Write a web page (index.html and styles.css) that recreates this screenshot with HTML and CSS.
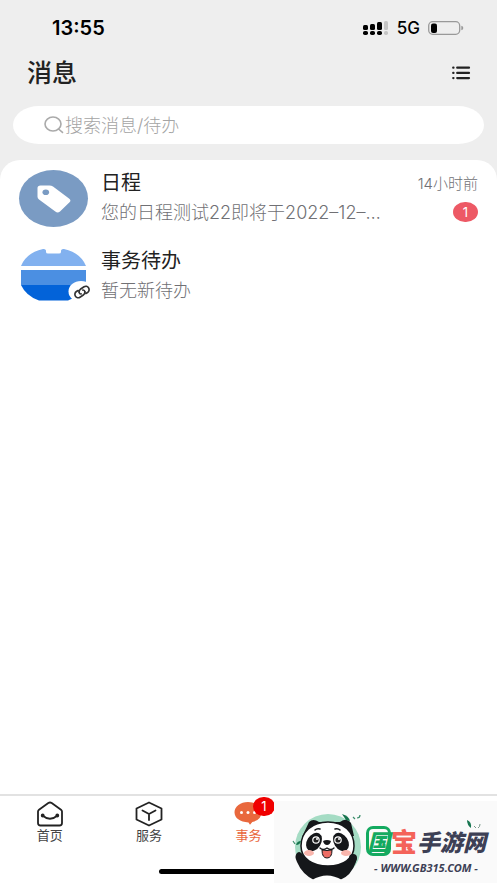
FILE: index.html
```html
<!DOCTYPE html>
<html lang="zh-CN">
<head>
    <meta charset="UTF-8">
    <meta name="viewport" content="width=device-width, initial-scale=1.0">
    <title>消息</title>
    <link rel="stylesheet" href="styles.css">
</head>
<body>
    <div class="status-bar">
        <span class="clock">13:55</span>
        <div class="status-icons">
            <svg class="signal" width="26" height="14" viewBox="0 0 26 14">
                <rect x="0" y="4" width="5" height="5" rx="1.5"/>
                <rect x="7" y="3" width="5" height="6" rx="1.5"/>
                <rect x="14" y="1" width="5" height="8" rx="1.5"/>
                <rect x="21" y="0" width="4" height="9" rx="1.5" fill="#c4c4c4"/>
                <rect x="0" y="10" width="5" height="4" rx="1.8"/>
                <rect x="7" y="10" width="5" height="4" rx="1.8"/>
                <rect x="14" y="10" width="5" height="4" rx="1.8"/>
                <rect x="21" y="10" width="4" height="4" rx="1.8" fill="#c4c4c4"/>
            </svg>
            <span class="network">5G</span>
            <svg width="36" height="14" viewBox="0 0 36 14">
                <rect x="0.7" y="0.7" width="31" height="12.6" rx="4" fill="none" stroke="#999" stroke-width="1.3"/>
                <rect x="3" y="2.5" width="6" height="9.5" rx="2"/>
                <path d="M33.3 4.8q2 .5 2 2.2t-2 2.2z" fill="#999"/>
            </svg>
        </div>
    </div>

    <header class="header">
        <h1>消息</h1>
        <button class="menu-btn" aria-label="菜单">
            <svg width="18" height="14" viewBox="0 0 18 14" fill="none" stroke="#222" stroke-width="2.2" stroke-linecap="round">
                <path d="M1.2 1.7h.3M5.2 1.7H17M1.2 6.9h.3M5.2 6.9H17M1.2 12.1h.3M5.2 12.1H17"/>
            </svg>
        </button>
    </header>

    <label class="search">
        <svg width="20" height="18" viewBox="0 0 20 18" fill="none" stroke="#aaa" stroke-width="1.6" stroke-linecap="round">
            <ellipse cx="9" cy="8" rx="8" ry="7"/>
            <path d="M14.5 13l4 3.4"/>
        </svg>
        <input type="text" placeholder="搜索消息/待办" aria-label="搜索">
    </label>

    <main class="messages">
        <a class="message" href="#">
            <svg class="avatar" width="69" height="57" viewBox="0 0 69 57">
                <ellipse cx="34.5" cy="28.5" rx="34.5" ry="28.5" fill="#7a9bc3"/>
                <path d="M18.5 18q0-2.5 3-2.5h9q2 0 3.500 1L50 28.500q2.700 2 .3 4L41 41.500q-2.300 2-4.700 0L20 29.500q-1.500-1-1.500-2.800z" fill="#fff"/>
                <ellipse cx="26.800" cy="22.300" rx="3.300" ry="2.800" fill="#7a9bc3"/>
            </svg>
            <div class="content">
                <h2>日程</h2>
                <p>您的日程测试22即将于2022–12–…</p>
            </div>
            <div class="side">
                <time>14小时前</time>
                <span class="count">1</span>
            </div>
        </a>
        <a class="message" href="#">
            <svg class="avatar" width="69" height="57" viewBox="0 4 69 57">
                <path d="M2 22Q7 9 24 5q2.500-.5 3 1.500V8q0 1.500 2 1.500H40q2 0 2-1.500V6.500q.5-2 3-1.500Q62 9 67 22z" fill="#82b1ef"/>
                <path d="M2 26H67V41H2z" fill="#4b8fe2"/>
                <path d="M2 41H67Q61 52 49 56.500H20Q7 52 2 41z" fill="#0363d9"/>
                <ellipse cx="62" cy="47.500" rx="12.500" ry="10.500" fill="#fff"/>
                <g transform="translate(63 48) rotate(-32)" fill="none" stroke="#333" stroke-width="1.700" stroke-linecap="round">
                    <path d="M2.500 1.500Q1.500 3.300-.5 3.300H-4.500a3.300 3.300 0 0 1 0-6.600H-2.500"/>
                    <path d="M-2.500-1.500Q-1.500-3.300.5-3.300H4.500a3.300 3.300 0 0 1 0 6.600H2.500"/>
                    <path d="M-2.500-1.500Q-3.300.5-1.800 1.200M2.500 1.500Q3.300-.5 1.800-1.200"/>
                </g>
            </svg>
            <div class="content">
                <h2>事务待办</h2>
                <p>暂无新待办</p>
            </div>
        </a>
    </main>

    <footer class="bottom">
        <nav class="tabs">
            <a class="tab" href="#">
                <svg width="28" height="26" viewBox="0 0 28 26" fill="none" stroke="#222" stroke-width="1.800" stroke-linejoin="round" stroke-linecap="round">
                    <path d="M2 10.500Q2 9.500 3 8.700L12.300 2q1.700-1 3.400 0L25 8.700q1 .8 1 1.800V22q0 2.500-2.500 2.500h-19Q2 24.500 2 22z"/>
                    <path d="M6.500 14.500Q14 21 21.500 14.500"/>
                    <circle cx="6.700" cy="14.500" r="1" fill="#222"/>
                    <circle cx="21.300" cy="14.500" r="1" fill="#222"/>
                </svg>
                <span>首页</span>
            </a>
            <a class="tab" href="#">
                <svg width="28" height="26" viewBox="0 0 28 26" fill="none" stroke="#222" stroke-width="1.800" stroke-linejoin="round" stroke-linecap="round">
                    <path d="M14 1.500L26.500 7.500V18.500L14 24.500 1.500 18.500V7.500z"/>
                    <path d="M7.500 9.500L14 13l6.500-3.500M14 13v6"/>
                </svg>
                <span>服务</span>
            </a>
            <a class="tab active" href="#">
                <svg width="28" height="26" viewBox="0 0 28 26">
                    <path d="M14 1C6.500 1 .5 5.500.5 11.300S6 21 14.500 21.500l1.500 2.300 2.300-2.800Q27.500 19 27.500 11.300C27.500 5.500 21.500 1 14 1z" fill="#e9683d"/>
                    <g fill="#fff"><circle cx="7.500" cy="11.500" r="1.500"/><circle cx="14" cy="11.500" r="1.500"/><circle cx="20.500" cy="11.500" r="1.500"/></g>
                </svg>
                <span>事务</span>
                <b class="tab-count">1</b>
            </a>
        </nav>
        <div class="home-bar"></div>

        <div class="brand">
            <svg width="70" height="68" viewBox="0 0 70 68">
                <circle cx="36" cy="34" r="33" fill="#a5dcc4"/>
                <path d="M5 40Q8 37 11 42L14 45H58L60 41Q66 42 64 49 59 63 48 67H22Q10 61 5 49 2 43 5 40z" fill="#15171a"/>
                <path d="M10 24L17 9Q21 5 27 9L48 9Q55 4 59 10L62 23z" fill="#15171a"/>
                <path d="M20 67Q35 58 50 67z" fill="#fff"/>
                <path d="M36 9C20 9 9 19 9 33c0 13 12 20 27 20s26-7 26-20C62 19 52 9 36 9z" fill="#fff" stroke="#15171a" stroke-width="1.500"/>
                <ellipse cx="22" cy="29" rx="7" ry="10" transform="rotate(32 22 29)" fill="#15171a"/>
                <ellipse cx="49" cy="29" rx="7" ry="10" transform="rotate(-32 49 29)" fill="#15171a"/>
                <circle cx="24" cy="27" r="3.200" fill="#222" stroke="#fff" stroke-width="1.200"/>
                <circle cx="46" cy="27" r="3.200" fill="#222" stroke="#fff" stroke-width="1.200"/>
                <circle cx="25" cy="26" r="1" fill="#fff"/>
                <circle cx="47" cy="26" r="1" fill="#fff"/>
                <path d="M23 17q2-2 5-1M43 16q3-1 5 1" fill="none" stroke="#15171a" stroke-width="1.500" stroke-linecap="round"/>
                <ellipse cx="17" cy="40" rx="5" ry="3" fill="#f9b5ac"/>
                <ellipse cx="54" cy="40" rx="5" ry="3" fill="#f9b5ac"/>
                <path d="M31 28q4-2 8 0-1 4-4 4t-4-4z" fill="#15171a"/>
                <path d="M28 35q3 3 7 0 4 3 7 0" fill="none" stroke="#15171a" stroke-width="1.300" stroke-linecap="round"/>
                <path d="M30 37q5 1 10 0 0 8-5 8t-5-8z" fill="#ed6d65" stroke="#15171a"/>
                <circle cx="61" cy="45" r="4" fill="#15171a"/>
                <path d="M50 1l4 6 4 1q-1-5-8-7z" fill="#14734c"/>
                <path d="M4 32q1-4 5-4-1 4-5 4z" fill="#14734c"/>
                <path d="M1 28l2 3M65 5q3 0 3-3M61 4l2 2" fill="none" stroke="#3c8e6c" stroke-width="1.200"/>
            </svg>
            <div class="brand-text">
                <div class="brand-name"><span class="green">国</span><span class="red">宝</span><span>手游网</span></div>
                <div class="brand-url">- WWW.GB315.COM -</div>
            </div>
            <svg class="leaves" width="16" height="12" viewBox="0 0 16 12">
                <path d="M2 1q5 2 4 8Q2 6 2 1z" fill="#187651"/>
                <path d="M9 7l2 2M13 9q2-1 2-4" fill="none" stroke="#789789"/>
            </svg>
        </div>
    </footer>
</body>
</html>
```

FILE: styles.css
```css
* {
    box-sizing: border-box;
}

body {
    margin: 0;
    min-height: 100vh;
    display: flex;
    flex-direction: column;
    background-color: #eee;
    color: #222;
    font-family: Inter, "Noto Sans CJK SC", sans-serif;
}

h1, h2, p {
    margin: 0;
}

a {
    color: inherit;
    text-decoration: none;
}

svg {
    display: block;
    flex-shrink: 0;
    overflow: visible;
}

.status-bar {
    display: flex;
    justify-content: space-between;
    align-items: center;
    height: 55px;
    padding: 0 33px 0 52px;
    color: #000;
}

.clock {
    font-size: 20px;
    font-weight: 600;
}

.status-icons {
    display: flex;
    align-items: center;
    gap: 8px;
}

.network {
    font-size: 17px;
    font-weight: 500;
}

.header {
    display: flex;
    justify-content: space-between;
    align-items: center;
    height: 36px;
    padding: 0 27px;
}

.header h1 {
    font-size: 25px;
    font-weight: 500;
    line-height: 36px;
}

.menu-btn {
    padding: 0;
    border: none;
    background: none;
    cursor: pointer;
}

.search {
    display: flex;
    align-items: center;
    gap: 1px;
    height: 38px;
    margin: 15px 13px 16px;
    padding: 0 31px;
    border-radius: 26px / 19px;
    background-color: #fff;
}

.search input {
    flex: 1;
    min-width: 0;
    padding: 0;
    border: none;
    outline: none;
    background: none;
    font-family: inherit;
    font-size: 18px;
    font-weight: 300;
}

.search input::placeholder {
    color: #a4a4a4;
}

.messages {
    flex: 1;
    padding: 10px 19px;
    border-radius: 20px 20px 0 0;
    background-color: #fff;
}

.message {
    display: flex;
    gap: 13px;
    margin-bottom: 18px;
}

.content {
    flex: 1;
    min-width: 0;
}

.content h2 {
    font-size: 20px;
    font-weight: 400;
    line-height: 26px;
}

.content p {
    overflow: hidden;
    color: #707074;
    font-size: 18px;
    font-weight: 300;
    line-height: 34px;
    white-space: nowrap;
}

.side {
    display: flex;
    flex-direction: column;
    align-items: flex-end;
    gap: 8px;
    padding-top: 4px;
}

.side time {
    color: #707074;
    font-size: 15px;
    font-weight: 300;
    line-height: 20px;
}

.count {
    width: 25px;
    border-radius: 12px / 10px;
    background-color: #ed5965;
    color: #fff;
    font-size: 13px;
    line-height: 20px;
    text-align: center;
}

.bottom {
    position: relative;
    height: 89px;
    border-top: 2px solid #e2e2e2;
    background-color: #fff;
}

.tabs {
    display: grid;
    grid-template-columns: repeat(5, 1fr);
    padding-top: 5px;
}

.tab {
    position: relative;
    display: flex;
    flex-direction: column;
    align-items: center;
    color: #444;
    font-size: 13px;
    line-height: 16px;
}

.tab.active {
    color: #e9683d;
}

.tab-count {
    position: absolute;
    top: -4px;
    left: 54px;
    width: 22px;
    border-radius: 11px / 10px;
    background-color: #f00000;
    color: #fff;
    font-size: 13px;
    font-weight: 400;
    line-height: 19px;
    text-align: center;
}

.home-bar {
    width: 36%;
    height: 5px;
    margin: 26px auto 0;
    border-radius: 3px;
    background-color: #000;
}

/* brand strip lies over the right side of the tab bar */
.brand {
    position: absolute;
    right: 0;
    bottom: 0;
    display: flex;
    align-items: flex-end;
    gap: 4px;
    width: 223px;
    height: 82px;
    padding: 0 10px 2px 18px;
    background-color: #fafafa;
}

.brand-text {
    padding-bottom: 4px;
    color: #3d4055;
    font-style: italic;
    white-space: nowrap;
}

.brand-name {
    display: flex;
    align-items: center;
    font-family: "Noto Sans CJK SC", sans-serif;
    font-size: 23px;
    font-weight: 900;
    line-height: 36px;
}

.brand-name .green {
    display: flex;
    justify-content: center;
    align-items: center;
    width: 25px;
    height: 30px;
    border: 3px solid #14aa60;
    border-radius: 7px;
    color: #14aa60;
}

.brand-name .red {
    color: #f46359;
    font-size: 26px;
    font-style: normal;
}

.brand-url {
    font-family: "Noto Sans", sans-serif;
    font-size: 11px;
    font-weight: 700;
    line-height: 18px;
    text-align: center;
}

.leaves {
    position: absolute;
    top: 18px;
    right: 16px;
}
```
